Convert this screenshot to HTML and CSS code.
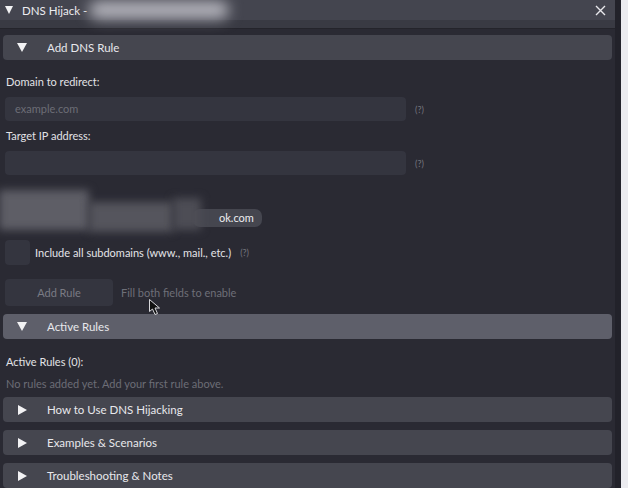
FILE: index.html
```html
<!DOCTYPE html>
<html>
<head>
<meta charset="utf-8">
<link rel="stylesheet" href="styles.css">
</head>
<body>
<div class="screen">
  <div class="window">
    <div class="titlebar">
      <span class="tri-down small"></span>
      <span class="title">DNS Hijack -</span>
      <span class="title-blur"></span>
      <span class="spacer"></span>
      <svg class="close" width="11" height="11" viewBox="0 0 11 11"><path d="M1 1L10 10M10 1L1 10" stroke="#e8e8ec" stroke-width="1.4"/></svg>
    </div>
    <div class="subbar"></div>
    <div class="content">
      <div class="header"><span class="tri-down"></span><span class="htext">Add DNS Rule</span></div>
      <div class="label l1">Domain to redirect:</div>
      <div class="field-row"><div class="input placeholder">example.com</div><span class="help">(?)</span></div>
      <div class="label l2">Target IP address:</div>
      <div class="field-row"><div class="input"></div><span class="help">(?)</span></div>
      <div class="redacted">
        <div class="blur b1"></div>
        <div class="blur b2"></div>
        <div class="blur b3"></div>
        <div class="badge">ok.com</div>
      </div>
      <div class="check-row"><div class="checkbox"></div><span class="ctext">Include all subdomains (www., mail., etc.)</span><span class="help small-help">(?)</span></div>
      <div class="btn-row"><div class="button">Add Rule</div><span class="hint">Fill both fields to enable</span></div>
      <div class="header active"><span class="tri-down"></span><span class="htext">Active Rules</span></div>
      <div class="label l3">Active Rules (0):</div>
      <div class="muted">No rules added yet. Add your first rule above.</div>
      <div class="header h-a"><span class="tri-right"></span><span class="htext">How to Use DNS Hijacking</span></div>
      <div class="header h-b"><span class="tri-right"></span><span class="htext">Examples &amp; Scenarios</span></div>
      <div class="header h-b"><span class="tri-right"></span><span class="htext">Troubleshooting &amp; Notes</span></div>
    </div>
    <svg class="cursor" width="14" height="18" viewBox="0 0 14 18"><path d="M1.5 1.5L1.5 13.5L4.5 11L7 16.5L9.5 15.5L7 10L11.5 10Z" fill="#111" stroke="#d8d8dc" stroke-width="1"/></svg>
  </div>
  <div class="edge"></div>
</div>
</body>
</html>
```

FILE: styles.css
```css
html, body {
  margin: 0;
  padding: 0;
  background: #2a2a33;
  overflow: hidden;
}
.screen {
  display: flex;
  width: 628px;
  height: 488px;
  font-family: Lato, "Open Sans", sans-serif;
  font-size: 11px;
  color: #e4e4e8;
}
.window {
  position: relative;
  width: 615px;
  height: 488px;
  background: #2a2a33;
  overflow: hidden;
  display: flex;
  flex-direction: column;
}
.edge {
  width: 13px;
  height: 488px;
  border-left: 6px solid #22222a;
  box-sizing: border-box;
  background: #ebebef;
}
.titlebar {
  height: 20px;
  background: #44454f;
  display: flex;
  align-items: center;
  padding-left: 5px;
  padding-right: 9px;
  flex-shrink: 0;
  font-size: 11.5px;
}
.title {
  margin-left: 9px;
  color: #ececf0;
}
.title-blur {
  width: 140px;
  height: 18px;
  margin-left: 2px;
  background: #b4b4bc;
  filter: blur(7px);
  border-radius: 9px;
}
.spacer { flex: 1; }
.close { display: block; }
.subbar {
  height: 8px;
  background: #393a43;
  border-bottom: 1px solid #24242b;
  flex-shrink: 0;
}
.content {
  padding: 6px 3px 0 3px;
  display: flex;
  flex-direction: column;
}
.header {
  height: 25px;
  background: #45464f;
  border-radius: 4px;
  display: flex;
  align-items: center;
  color: #e8e8ec;
  flex-shrink: 0;
  font-size: 11.5px;
}
.header.active { background: #5e5f6a; margin-top: 8px; }
.h-a { margin-top: 6px; }
.h-b { margin-top: 8px; }
.tri-down {
  width: 0;
  height: 0;
  border-left: 5px solid transparent;
  border-right: 5px solid transparent;
  border-top: 9px solid #f2f2f4;
  margin-left: 14px;
}
.tri-down.small {
  margin-left: 0;
  border-left-width: 4px;
  border-right-width: 4px;
  border-top-width: 8px;
}
.tri-right {
  width: 0;
  height: 0;
  border-top: 5px solid transparent;
  border-bottom: 5px solid transparent;
  border-left: 9px solid #f2f2f4;
  margin-left: 15px;
}
.htext { margin-left: 20px; }
.tri-right + .htext { margin-left: 20px; }
.label {
  padding-left: 3px;
  color: #e2e2e6;
  line-height: 14px;
}
.l1 { margin-top: 15px; }
.l2 { margin-top: 8px; }
.l3 { margin-top: 16px; }
.field-row {
  display: flex;
  align-items: center;
  margin-top: 8px;
  padding-left: 2px;
}
.input {
  width: 401px;
  height: 24px;
  box-sizing: border-box;
  background: #34353f;
  border-radius: 4px;
  padding-left: 10px;
  line-height: 24px;
}
.placeholder { color: #6c6d76; }
.help {
  margin-left: 9px;
  color: #75767e;
  font-size: 9px;
}
.redacted {
  display: flex;
  align-items: flex-end;
  height: 42px;
  margin-top: 15px;
  position: relative;
}
.blur { filter: blur(4px); }
.b1 { width: 90px; height: 40px; background: #5e5e66; align-self: flex-start; margin-left: -4px; }
.b2 { width: 84px; height: 30px; background: #55555d; margin-bottom: 0; }
.b3 { width: 28px; height: 32px; background: #4d4d55; margin-bottom: 2px; }
.badge {
  background: #45464f;
  border-radius: 7px;
  height: 18px;
  line-height: 18px;
  padding: 0 8px 0 26px;
  margin-left: -8px;
  margin-bottom: 5px;
  color: #ececf0;
}
.check-row {
  display: flex;
  align-items: center;
  margin-top: 8px;
  padding-left: 2px;
}
.checkbox {
  width: 25px;
  height: 25px;
  background: #34353f;
  border-radius: 4px;
}
.ctext { margin-left: 5px; color: #e4e4e8; }
.small-help { margin-left: 9px; }
.btn-row {
  display: flex;
  align-items: center;
  margin-top: 14px;
  padding-left: 2px;
}
.button {
  width: 108px;
  height: 27px;
  background: #34353f;
  border-radius: 4px;
  color: #7a7b84;
  display: flex;
  align-items: center;
  justify-content: center;
}
.hint { margin-left: 8px; color: #6e6f78; }
.muted {
  padding-left: 3px;
  margin-top: 8px;
  color: #6c6d76;
  line-height: 14px;
}
.cursor {
  position: absolute;
  left: 148px;
  top: 298px;
}
```
